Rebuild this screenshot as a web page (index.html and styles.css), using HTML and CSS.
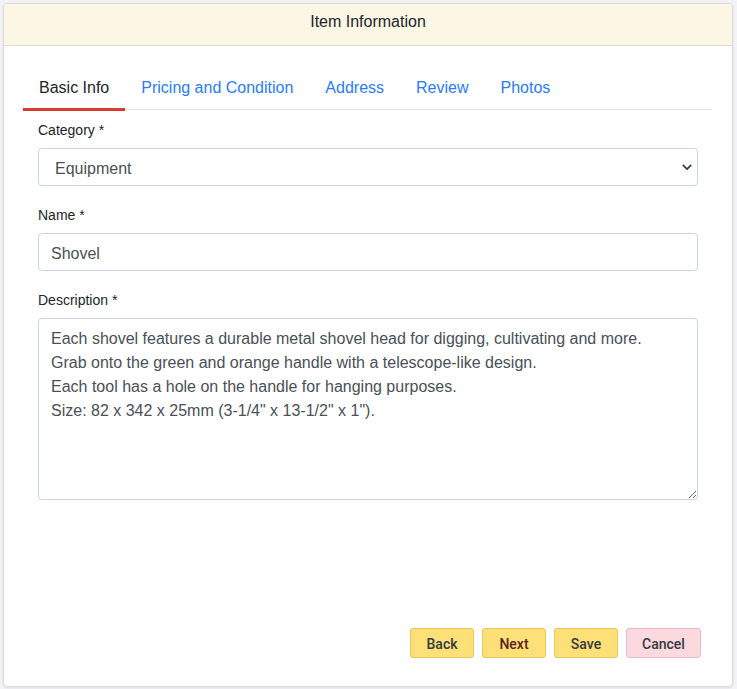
FILE: index.html
```html
<!DOCTYPE html>
<html lang="en">
<head>
<meta charset="utf-8">
<title>Item Information</title>
<link rel="stylesheet" href="styles.css">
</head>
<body>
<div class="card">
  <div class="card-header">Item Information</div>
  <div class="card-body">
    <ul class="tabs">
      <li class="tab active">Basic Info</li>
      <li class="tab">Pricing and Condition</li>
      <li class="tab">Address</li>
      <li class="tab">Review</li>
      <li class="tab">Photos</li>
    </ul>
    <form class="form">
      <div class="field">
        <label class="label" for="category">Category *</label>
        <div class="select-wrap">
          <select id="category" class="control select">
            <option>Equipment</option>
          </select>
          <svg class="chevron" width="12" height="8" viewBox="0 0 12 8"><path d="M1.5 1.5 L6 6 L10.5 1.5" fill="none" stroke="#343a40" stroke-width="2" stroke-linecap="round" stroke-linejoin="round"/></svg>
        </div>
      </div>
      <div class="field">
        <label class="label" for="name">Name *</label>
        <input id="name" class="control input" type="text" value="Shovel">
      </div>
      <div class="field">
        <label class="label" for="desc">Description *</label>
        <textarea id="desc" class="control textarea">Each shovel features a durable metal shovel head for digging, cultivating and more.
Grab onto the green and orange handle with a telescope-like design.
Each tool has a hole on the handle for hanging purposes.
Size: 82 x 342 x 25mm (3-1/4" x 13-1/2" x 1").</textarea>
      </div>
    </form>
    <div class="actions">
      <button class="btn btn-warn" type="button">Back</button>
      <button class="btn btn-warn btn-next" type="button">Next</button>
      <button class="btn btn-warn" type="button">Save</button>
      <button class="btn btn-cancel" type="button">Cancel</button>
    </div>
  </div>
</div>
</body>
</html>
```

FILE: styles.css
```css
html, body {
  margin: 0;
  padding: 0;
}
body {
  background: #f3f3f5;
  font-family: "Liberation Sans", Arial, sans-serif;
  color: #212529;
  padding: 3px 4px 2px 3px;
  box-sizing: border-box;
  height: 689px;
}
.card {
  height: 684px;
  box-sizing: border-box;
  background: #fff;
  border: 1px solid #dcdcdf;
  border-radius: 4px;
  box-shadow: 0 1px 3px rgba(0,0,0,0.08);
  display: flex;
  flex-direction: column;
  overflow: hidden;
}
.card-header {
  height: 42px;
  box-sizing: border-box;
  padding-bottom: 5px;
  flex: none;
  background: #fcf6e4;
  border-bottom: 1px solid #e2ddcc;
  display: flex;
  align-items: center;
  justify-content: center;
  font-size: 16px;
  color: #212529;
}
.card-body {
  flex: 1;
  display: flex;
  flex-direction: column;
  padding: 20px 20px 28px 19px;
}
.tabs {
  list-style: none;
  margin: 0;
  padding: 0;
  display: flex;
  border-bottom: 1px solid #dee2e6;
  height: 43px;
  box-sizing: content-box;
}
.tab {
  padding: 11px 16px 0;
  font-size: 16px;
  line-height: 22px;
  color: #2b7cf6;
}
.tab.active {
  color: #212529;
  border-bottom: 3px solid #d93a33;
  margin-bottom: -2px;
}
.form {
  padding: 10px 14px 0 15px;
  display: flex;
  flex-direction: column;
  gap: 19px;
}
.field {
  display: flex;
  flex-direction: column;
}
.label {
  font-size: 14px;
  line-height: 21px;
  margin-bottom: 7px;
  color: #212529;
}
.control {
  box-sizing: border-box;
  width: 100%;
  border: 1px solid #ced4da;
  border-radius: 4px;
  font-family: "Liberation Sans", Arial, sans-serif;
  font-size: 16px;
  color: #495057;
  background: #fff;
  margin: 0;
}
.select-wrap {
  position: relative;
}
.select {
  appearance: none;
  -webkit-appearance: none;
  height: 38px;
  padding: 2px 32px 0 16px;
}
.chevron {
  position: absolute;
  right: 6px;
  top: 16px;
  width: 10px;
  height: 7px;
}
.input {
  height: 38px;
  padding: 3px 12px 0;
}
.textarea {
  height: 182px;
  padding: 8px 12px 6px;
  line-height: 24px;
  resize: vertical;
}
.actions {
  margin-top: auto;
  display: flex;
  justify-content: flex-end;
  gap: 8px;
  padding-right: 11px;
}
.btn {
  font-family: Roboto, "Liberation Sans", sans-serif;
  font-size: 14px;
  font-weight: 500;
  height: 30px;
  border-radius: 3px;
  padding: 1px 0 0;
  cursor: pointer;
}
.btn-warn {
  width: 64px;
  background: #fde077;
  border: 1px solid #e8c75a;
  color: #343a40;
}
.btn-next {
  color: #5a1d1d;
}
.btn-cancel {
  width: 75px;
  background: #fbd9de;
  border: 1px solid #e9bcc3;
  color: #343a40;
}
```
